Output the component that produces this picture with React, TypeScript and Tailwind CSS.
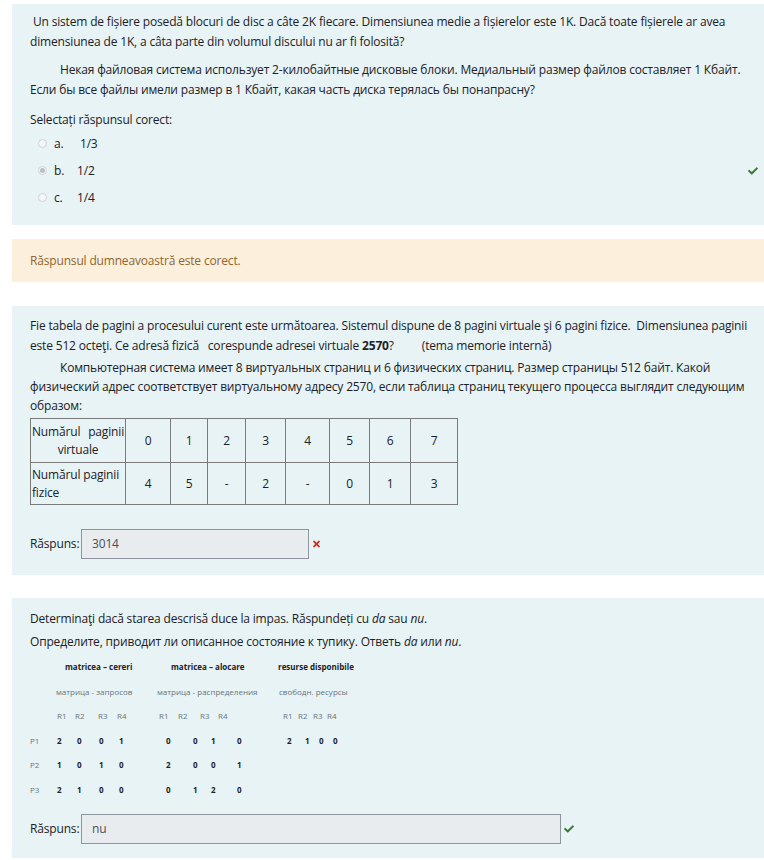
import React from 'react'
import { FaCheck, FaTimes } from 'react-icons/fa'

const Radio = ({ checked }: { checked?: boolean }) => (
  <span className="flex items-center justify-center w-[9px] h-[9px] rounded-full border border-[#cfd4d8] bg-[#f4f6f7]">
    {checked && <span className="w-[5px] h-[5px] rounded-full bg-[#b9bec3]" />}
  </span>
)

const Option = ({
  letter,
  text,
  checked,
  correct,
}: {
  letter: string
  text: string
  checked?: boolean
  correct?: boolean
}) => (
  <div className="flex items-center h-[27px] pl-[8px]">
    <Radio checked={checked} />
    <span className="ml-[7px] w-[23px]">{letter}</span>
    <span>{text}</span>
    {correct && <FaCheck className="ml-auto mr-[1px] text-[#357a32] w-[12px] h-[10px]" />}
  </div>
)

const AnswerBox = ({ value, width }: { value: string; width: string }) => (
  <div
    className={`h-[30px] border border-[#8f959e] bg-[#e9ecef] pl-[10px] flex items-center text-[#495057] ${width}`}
  >
    {value}
  </div>
)

const cell = 'border border-[#7a7a7a] text-center'

export default function App() {
  return (
    <div
      className="w-[764px] h-[860px] bg-white text-[#1d2125] text-[12px] tracking-[-0.17px] overflow-hidden"
      style={{ fontFamily: '"Open Sans", "Noto Sans", sans-serif' }}
    >
      {/* intrebarea 1 */}
      <div className="ml-[12px] mt-[4px] h-[221px] bg-[#e7f3f5] pl-[18px] pr-[4px] pt-[8px]">
        <p className="leading-[20px] whitespace-nowrap">
          &nbsp;Un sistem de fișiere posedă blocuri de disc a câte 2K fiecare. Dimensiunea medie a fișierelor este
          1K. Dacă toate fișierele ar avea
          <br />
          dimensiunea de 1K, a câta parte din volumul discului nu ar fi folosită?
        </p>
        <p className="mt-[8px] leading-[20px] whitespace-nowrap">
          <span className="pl-[30px]" />
          Некая файловая система использует 2-килобайтные дисковые блоки. Медиальный размер файлов составляет 1 Кбайт.
          <br />
          Если бы все файлы имели размер в 1 Кбайт, какая часть диска терялась бы понапрасну?
        </p>
        <p className="mt-[10px] leading-[20px]">Selectați răspunsul corect:</p>
        <div>
          <Option letter="a." text={'\u00a01/3'} />
          <Option letter="b." text="1/2" checked correct />
          <Option letter="c." text="1/4" />
        </div>
      </div>

      {/* feedback */}
      <div className="ml-[12px] mt-[14px] h-[43px] bg-[#fcefdc] pl-[18px] flex items-center text-[#8e662e]">
        Răspunsul dumneavoastră este corect.
      </div>

      {/* intrebarea 2 */}
      <div className="ml-[12px] mt-[24px] h-[269px] bg-[#e7f3f5] pl-[18px] pt-[10px]">
        <p className="leading-[19.5px] whitespace-nowrap">
          Fie tabela de pagini a procesului curent este următoarea. Sistemul dispune de 8 pagini virtuale şi 6 pagini
          fizice.&nbsp; Dimensiunea paginii
          <br />
          este 512 octeţi. Ce adresă fizică &nbsp; corespunde adresei virtuale <b>2570</b>?
          <span className="pl-[28px]">(tema memorie internă)</span>
        </p>
        <p className="mt-[3px] leading-[19px] whitespace-nowrap">
          <span className="pl-[30px]" />
          Компьютерная система имеет 8 виртуальных страниц и 6 физических страниц. Размер страницы 512 байт. Какой
          <br />
          физический адрес соответствует виртуальному адресу 2570, если таблица страниц текущего процесса выглядит
          следующим
          <br />
          образом:
        </p>
        <table className="mt-[3px] border-collapse border border-[#333] leading-[18px]">
          <tbody>
            <tr className="h-[44px]">
              <td className={`${cell} w-[95px] px-[1px]`}>
                <div className="flex justify-between">
                  <span>Numărul</span>
                  <span>paginii</span>
                </div>
                <div>virtuale</div>
              </td>
              <td className={`${cell} w-[45px]`}>0</td>
              <td className={`${cell} w-[37px]`}>1</td>
              <td className={`${cell} w-[38px]`}>2</td>
              <td className={`${cell} w-[40px]`}>3</td>
              <td className={`${cell} w-[44px]`}>4</td>
              <td className={`${cell} w-[40px]`}>5</td>
              <td className={`${cell} w-[41px]`}>6</td>
              <td className={`${cell} w-[47px]`}>7</td>
            </tr>
            <tr className="h-[42px]">
              <td className="border border-[#7a7a7a] text-left px-[1px] whitespace-nowrap">
                Numărul paginii
                <br />
                fizice
              </td>
              <td className={cell}>4</td>
              <td className={cell}>5</td>
              <td className={cell}>-</td>
              <td className={cell}>2</td>
              <td className={cell}>-</td>
              <td className={cell}>0</td>
              <td className={cell}>1</td>
              <td className={cell}>3</td>
            </tr>
          </tbody>
        </table>
        <div className="mt-[24px] flex items-center">
          <span className="w-[51px] whitespace-nowrap">Răspuns:</span>
          <AnswerBox value="3014" width="w-[228px]" />
          <FaTimes className="ml-[3px] text-[#ca3120] w-[9px] h-[10px]" />
        </div>
      </div>

      {/* intrebarea 3 */}
      <div className="ml-[12px] mt-[23px] h-[260px] bg-[#e7f3f5] pl-[18px] pt-[11px]">
        <p className="leading-[20px]">
          Determinaţi dacă starea descrisă duce la impas. Răspundeți cu <i>da</i> sau <i>nu</i>.
        </p>
        <p className="mt-[3px] leading-[20px]">
          Определите, приводит ли описанное состояние к тупику. Ответь <i>da</i> или <i>nu</i>.
        </p>
        <div className="mt-[3px] text-[8px] tracking-normal">
          <div className="flex items-center h-[24.5px] font-bold">
            <span className="ml-[35px] w-[106px]">matricea – cereri</span>
            <span className="w-[107px]">matricea – alocare</span>
            <span>resurse disponibile</span>
          </div>
          <div className="flex items-center h-[24.5px] text-[#6a737b]">
            <span className="ml-[26px] w-[101px]">матрица - запросов</span>
            <span className="w-[122px]">матрица - распределения</span>
            <span>свободн. ресурсы</span>
          </div>
          <div className="flex items-center h-[24.5px] text-[#6a737b]">
            <span className="ml-[27px] w-[18px]">R1</span>
            <span className="w-[23px]">R2</span>
            <span className="w-[19px]">R3</span>
            <span className="w-[42px]">R4</span>
            <span className="w-[19px]">R1</span>
            <span className="w-[22px]">R2</span>
            <span className="w-[18px]">R3</span>
            <span className="w-[65px]">R4</span>
            <span className="w-[15px]">R1</span>
            <span className="w-[15px]">R2</span>
            <span className="w-[14px]">R3</span>
            <span>R4</span>
          </div>
          {[
            ['P1', '2', '0', '0', '1', '0', '0', '1', '0', '2', '1', '0', '0'],
            ['P2', '1', '0', '1', '0', '2', '0', '0', '1'],
            ['P3', '2', '1', '0', '0', '0', '1', '2', '0'],
          ].map((row) => (
            <div
              key={row[0]}
              className="grid grid-cols-[27px_20px_22px_20px_47px_27px_18px_26px_50px_18px_14px_14px_14px] items-center h-[24.5px] font-bold"
            >
              {row.map((v, i) => (
                <span key={i} className={i === 0 ? 'font-normal text-[#6a737b]' : ''}>
                  {v}
                </span>
              ))}
            </div>
          ))}
        </div>
        <div className="mt-[12px] flex items-center">
          <span className="w-[51px] whitespace-nowrap">Răspuns:</span>
          <AnswerBox value="nu" width="w-[480px]" />
          <FaCheck className="ml-[2px] text-[#357a32] w-[12px] h-[10px]" />
        </div>
      </div>
    </div>
  )
}
